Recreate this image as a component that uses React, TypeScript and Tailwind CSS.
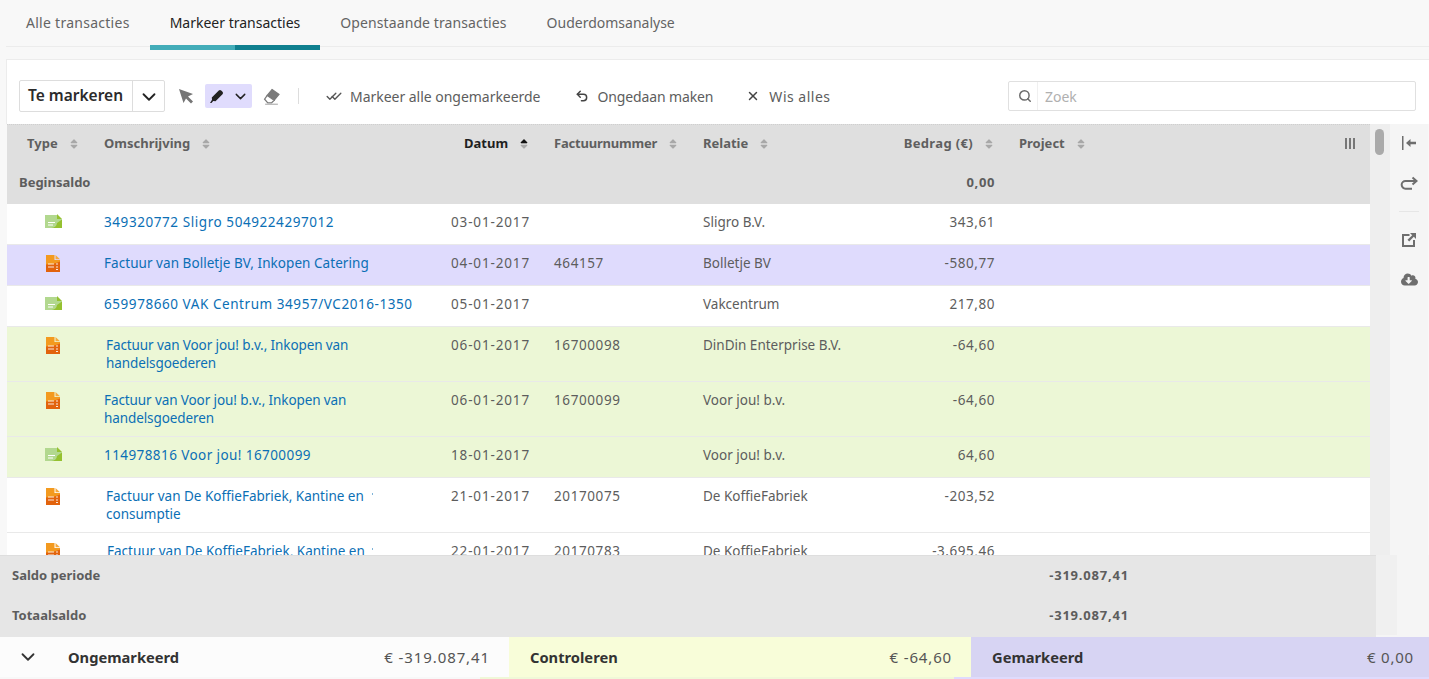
import { Check, ChevronDown, Search, Undo2, X } from 'lucide-react';
import { FaCloudDownloadAlt, FaSort, FaSortUp } from 'react-icons/fa';

const COLS = 'grid grid-cols-[97px_347px_103px_149px_292px_1fr]';

type Row = {
  kind: 'bank' | 'invoice';
  desc: string;
  date: string;
  invoice?: string;
  relation: string;
  amount: string;
  height: string;
  bg?: string;
  shift?: string;
  mark?: boolean;
};

const rows: Row[] = [
  { kind: 'bank', desc: '349320772 Sligro 5049224297012', date: '03-01-2017', relation: 'Sligro B.V.', amount: '343,61', height: 'h-[41px]', shift: 'tracking-[0.57px]' },
  { kind: 'invoice', desc: 'Factuur van Bolletje BV, Inkopen Catering', date: '04-01-2017', invoice: '464157', relation: 'Bolletje BV', amount: '-580,77', height: 'h-[41px]', bg: 'bg-[#dfdbfd]', shift: 'tracking-[0.05px]' },
  { kind: 'bank', desc: '659978660 VAK Centrum 34957/VC2016-1350', date: '05-01-2017', relation: 'Vakcentrum', amount: '217,80', height: 'h-[41px]', shift: 'tracking-[0.56px]' },
  { kind: 'invoice', desc: 'Factuur van Voor jou! b.v., Inkopen van handelsgoederen', date: '06-01-2017', invoice: '16700098', relation: 'DinDin Enterprise B.V.', amount: '-64,60', height: 'h-[55px]', bg: 'bg-[#ecf7d6]', shift: 'pl-[2px] tracking-[-0.1px]' },
  { kind: 'invoice', desc: 'Factuur van Voor jou! b.v., Inkopen van handelsgoederen', date: '06-01-2017', invoice: '16700099', relation: 'Voor jou! b.v.', amount: '-64,60', height: 'h-[55px]', bg: 'bg-[#ecf7d6]', shift: 'tracking-[-0.1px]' },
  { kind: 'bank', desc: '114978816 Voor jou! 16700099', date: '18-01-2017', relation: 'Voor jou! b.v.', amount: '64,60', height: 'h-[41px]', bg: 'bg-[#ecf7d6]', shift: 'tracking-[0.42px]' },
  { kind: 'invoice', desc: 'Factuur van De KoffieFabriek, Kantine en consumptie', date: '21-01-2017', invoice: '20170075', relation: 'De KoffieFabriek', amount: '-203,52', height: 'h-[55px]', shift: 'pl-[2px]', mark: true },
  { kind: 'invoice', desc: 'Factuur van De KoffieFabriek, Kantine en consumptie', date: '22-01-2017', invoice: '20170783', relation: 'De KoffieFabriek', amount: '-3.695,46', height: 'h-[55px]', shift: 'pl-[3px]', mark: true },
];

function BankIcon() {
  return (
    <svg width="18" height="14" viewBox="0 0 18 14">
      <path d="M0 1h12l5 4.500V14H0z" fill="#b2d88f" />
      <path d="M17 5.500V14H6.500q5-.5 5.500-5z" fill="#95c130" />
      <path d="M12 0l5 5h-5z" fill="#95c130" />
      <path d="M3 8h7v1H3zM3 10.500h5v1H3z" fill="#fff" />
    </svg>
  );
}

function InvoiceIcon() {
  return (
    <svg width="14" height="17" viewBox="0 0 14 17">
      <path d="M0 0h8.500v5H14v12H0z" fill="#f39a1f" />
      <path d="M0 9.500q8 0 14-3V17H0z" fill="#e2630d" />
      <path d="M9.500 0L14 4.300H9.500z" fill="#f5a93f" />
      <path d="M2 8.500h6v1H2zM2 11.500h6v1H2zM10 8.500h2v1h-2zM10 11.500h2v1h-2zM10 14h2v1h-2z" fill="#fff" fillOpacity="0.85" />
    </svg>
  );
}

function HeaderCell({ label, active, className }: { label: string; active?: boolean; className?: string }) {
  return (
    <div className={`flex items-center ${className ?? ''}`}>
      <span className={`font-bold ${active ? 'text-[#1f1f1f]' : 'text-[#5f5f5f]'}`}>{label}</span>
      {active ? (
        <span className="relative ml-[10px] inline-block h-[12px] w-[10px]">
          <FaSort className="absolute inset-0 size-[12px] text-[#a8a8a8]" />
          <FaSortUp className="absolute inset-0 size-[12px] text-[#111111]" />
        </span>
      ) : (
        <FaSort className="ml-[10px] size-[12px] text-[#a8a8a8]" />
      )}
    </div>
  );
}

function TransactionRow({ row }: { row: Row }) {
  return (
    <div className={`${COLS} ${row.height} shrink-0 border-b border-[#e9e9e9] pt-[9px] text-[13.500px] text-[#5d5d5d] ${row.bg ?? 'bg-white'}`}>
      <div className={`flex h-[18px] justify-center pt-[1px] ${row.kind === 'bank' ? 'pr-[3px]' : 'pr-[5px]'}`}>
        {row.kind === 'bank' ? <BankIcon /> : <InvoiceIcon />}
      </div>
      <div className={`relative pr-[30px] leading-[18px] text-[#0b6fb5] ${row.shift ?? ''}`}>
        {row.desc}
        {row.mark && <span className="absolute left-[268px] top-[6px] h-[2px] w-[1px] bg-[#7fb4d8]" />}
      </div>
      <div className="leading-[18px] tracking-[0.85px]">{row.date}</div>
      <div className="leading-[18px] tracking-[0.6px]">{row.invoice}</div>
      <div className="flex justify-between leading-[18px]">
        <span>{row.relation}</span>
        <span className="tracking-[0.55px]">{row.amount}</span>
      </div>
      <div />
    </div>
  );
}

function SideActions() {
  return (
    <div className="flex w-[38px] shrink-0 flex-col items-center bg-[#f5f5f5] pt-[11px] text-[#6e6e6e]">
      <svg width="16" height="16" viewBox="0 0 16 16" fill="currentColor">
        <rect x="1" y="1" width="1.500" height="14" />
        <path d="M5 8l4.500-4v2.700H15v2.600H9.500V12z" />
      </svg>
      <svg className="mt-[25px]" width="18" height="16" viewBox="0 0 18 16" fill="none" stroke="currentColor" strokeWidth="2">
        <path d="M16 5H5.500a3.800 3.800 0 0 0 0 7.700H12" />
        <path d="M12.500 1.500L16.500 5l-4 3.500" fill="none" />
      </svg>
      <div className="mt-[19px] h-px w-[20px] bg-[#e6e6e6]" />
      <svg className="mt-[20px]" width="16" height="16" viewBox="0 0 16 16" fill="currentColor">
        <path d="M1 2h7.500v2H3v9h9V8h2v7H1z" />
        <path d="M9 1h6v6l-2.200-2.200L8.200 9.500 6.500 7.800l4.700-4.600z" />
      </svg>
      <FaCloudDownloadAlt className="mt-[23px] size-[17px]" />
    </div>
  );
}

export default function App() {
  return (
    <div className="flex h-[679px] flex-col overflow-hidden bg-[#f8f8f8] font-['Noto_Sans',sans-serif] text-[13px] text-[#5d5d5d]">
      <div className="ml-[6px] flex h-[47px] shrink-0 border-b border-[#ececec] text-[14px] text-[#646464]">
        <div className="px-[20px] pt-[12px] tracking-[0.27px]">Alle transacties</div>
        <div className="relative px-[20px] pt-[12px] text-[#222222]">
          Markeer transacties
          <span className="absolute -bottom-[4px] left-0 right-0 h-[5px] bg-[linear-gradient(100deg,#43adb9_50%,#10808f_50%)]" />
        </div>
        <div className="px-[20px] pt-[12px] tracking-[0.1px]">Openstaande transacties</div>
        <div className="px-[20px] pt-[12px]">Ouderdomsanalyse</div>
      </div>

      <div className="ml-[6px] mt-[12px] flex h-[65px] shrink-0 items-center border-l border-t border-[#ececec] bg-white pl-[12px] pr-[13px] pt-[8px]">
        <div className="flex h-[32px] w-[146px] items-center rounded-[2px] border border-[#dddddd]">
          <span className="w-[112px] pl-[8px] text-[15.500px] font-semibold text-[#2b2b2b]">Te markeren</span>
          <span className="flex h-full flex-1 items-center justify-center border-l border-[#dddddd] pt-[2px]">
            <ChevronDown className="size-[22px] text-[#222222]" />
          </span>
        </div>
        <svg className="ml-[12px]" width="18" height="18" viewBox="0 0 18 18" fill="#757575">
          <path d="M2 2l14 5-5 2.500 5 5-2 2-5-5L6.500 16z" />
        </svg>
        <div className="ml-[10px] flex h-[24px] w-[47px] items-center rounded-[2px] bg-[#e0dcfd] pl-[5px] text-[#222222]">
          <svg width="14" height="14" viewBox="0 0 14 14" fill="currentColor">
            <path d="M0 14l2-3.200L1.800 8.500 8.800 1.500q1.200-1.200 2.400 0l1.300 1.300q1.200 1.200 0 2.400l-7 7-2.300-.2L1.500 14z" />
          </svg>
          <ChevronDown className="ml-[8px] size-[17px]" />
        </div>
        <svg className="ml-[11px]" width="17" height="17" viewBox="0 0 16 16" stroke="#7a7a7a" strokeWidth="1.200">
          <path d="M8.500 1.500L15 6l-4.500 5.500L4 7z" fill="#7a7a7a" />
          <path d="M4 7l6.500 4.500L8 14H4.500l-3-3.500z" fill="#fff" />
          <path d="M2 15.300h12" stroke="#b5b5b5" />
        </svg>
        <div className="ml-[18px] h-[16px] w-px bg-[#dddddd]" />
        <span className="relative ml-[26px] h-[13px] w-[18px] text-[#555555]">
          <Check className="absolute left-0 top-0 size-[13px]" strokeWidth={2.500} />
          <Check className="absolute left-[5px] top-0 size-[13px]" strokeWidth={2.500} />
        </span>
        <span className="ml-[7px] text-[14px] tracking-[-0.03px]">Markeer alle ongemarkeerde</span>
        <Undo2 className="ml-[34px] size-[14px] text-[#444444]" strokeWidth={2.500} />
        <span className="ml-[9px] text-[14px] tracking-[-0.13px]">Ongedaan maken</span>
        <X className="ml-[33px] size-[14px] text-[#444444]" strokeWidth={2.500} />
        <span className="ml-[9px] text-[14px] tracking-[0.5px]">Wis alles</span>
        <div className="ml-auto flex h-[30px] w-[408px] items-center rounded-[2px] border border-[#e0e0e0]">
          <span className="flex h-full w-[29px] items-center border-r border-[#f0f0f0] pl-[9px]">
            <Search className="size-[14px] text-[#6a6a6a]" strokeWidth={2.500} />
          </span>
          <span className="ml-[7px] text-[14px] text-[#b0b0b0]">Zoek</span>
        </div>
      </div>

      <div className="ml-[7px] flex h-[431px] shrink-0 overflow-hidden">
        <div className="flex w-[1363px] shrink-0 flex-col">
          <div className="h-[80px] shrink-0 border-t border-dotted border-[#cfcfcf] bg-[#dfdfdf]">
            <div className={`${COLS} h-[37px] items-center`}>
              <HeaderCell label="Type" className="pl-[20px]" />
              <HeaderCell label="Omschrijving" />
              <HeaderCell label="Datum" active className="pl-[13px]" />
              <HeaderCell label="Factuurnummer" className="tracking-[-0.2px]" />
              <div className="flex justify-between">
                <HeaderCell label="Relatie" />
                <HeaderCell label="Bedrag (€)" className="tracking-[0.35px]" />
              </div>
              <div className="flex justify-between pl-[24px] pr-[15px]">
                <HeaderCell label="Project" />
                <div className="flex items-center gap-[2px]">
                  <span className="h-[11px] w-[2px] bg-[#777777]" />
                  <span className="h-[11px] w-[2px] bg-[#777777]" />
                  <span className="h-[11px] w-[2px] bg-[#777777]" />
                </div>
              </div>
            </div>
            <div className="flex h-[42px] items-center justify-between pl-[12px] pr-[375px] font-bold">
              <span>Beginsaldo</span>
              <span className="tracking-[0.6px]">0,00</span>
            </div>
          </div>
          {rows.map((row) => (
            <TransactionRow key={row.desc + row.date} row={row} />
          ))}
        </div>
        <div className="relative w-[20px] shrink-0 bg-[#eeeeee]">
          <span className="absolute left-[5px] top-[5px] h-[26px] w-[9px] rounded-full bg-[#aaaaaa]" />
        </div>
        <SideActions />
      </div>

      <div className="flex h-[82px] shrink-0 bg-[#f5f5f5]">
        <div className="w-[1376px] shrink-0 border-t border-[#dedede] bg-[#e6e6e6] font-bold">
          <div className="flex h-[40px] items-center justify-between pl-[12px] pr-[247px]">
            <span>Saldo periode</span>
            <span className="tracking-[0.8px]">-319.087,41</span>
          </div>
          <div className="flex h-[39px] items-center justify-between pl-[12px] pr-[247px] pt-[1px]">
            <span>Totaalsaldo</span>
            <span className="tracking-[0.8px]">-319.087,41</span>
          </div>
        </div>
        <div className="h-[80px] w-[21px] bg-[#f0f0f0]" />
      </div>

      <div className="flex h-[40px] shrink-0 items-center text-[14.700px] text-[#333333]">
        <div className="flex h-full w-[509px] items-center bg-[#fcfcfc] pl-[17px] pr-[19px]">
          <ChevronDown className="size-[22px] text-[#333333]" />
          <span className="ml-[29px] font-bold">Ongemarkeerd</span>
          <span className="ml-auto text-[15px] tracking-[0.9px] text-[#555555]">€ -319.087,41</span>
        </div>
        <div className="flex h-full w-[462px] items-center justify-between bg-[#f8fdd9] pl-[21px] pr-[19px]">
          <span className="font-bold">Controleren</span>
          <span className="text-[15px] tracking-[0.85px] text-[#555555]">€ -64,60</span>
        </div>
        <div className="flex h-full flex-1 items-center justify-between bg-[#d7d4f3] pl-[21px] pr-[15px]">
          <span className="font-bold">Gemarkeerd</span>
          <span className="text-[15px] tracking-[0.8px] text-[#555555]">€ 0,00</span>
        </div>
      </div>
      <div className="flex h-[2px] shrink-0">
        <div className="w-[480px] bg-[#f8f8f8]" />
        <div className="w-[474px] bg-[#f0f8d8]" />
        <div className="flex-1 bg-[#dfdbfd]" />
      </div>
    </div>
  );
}
